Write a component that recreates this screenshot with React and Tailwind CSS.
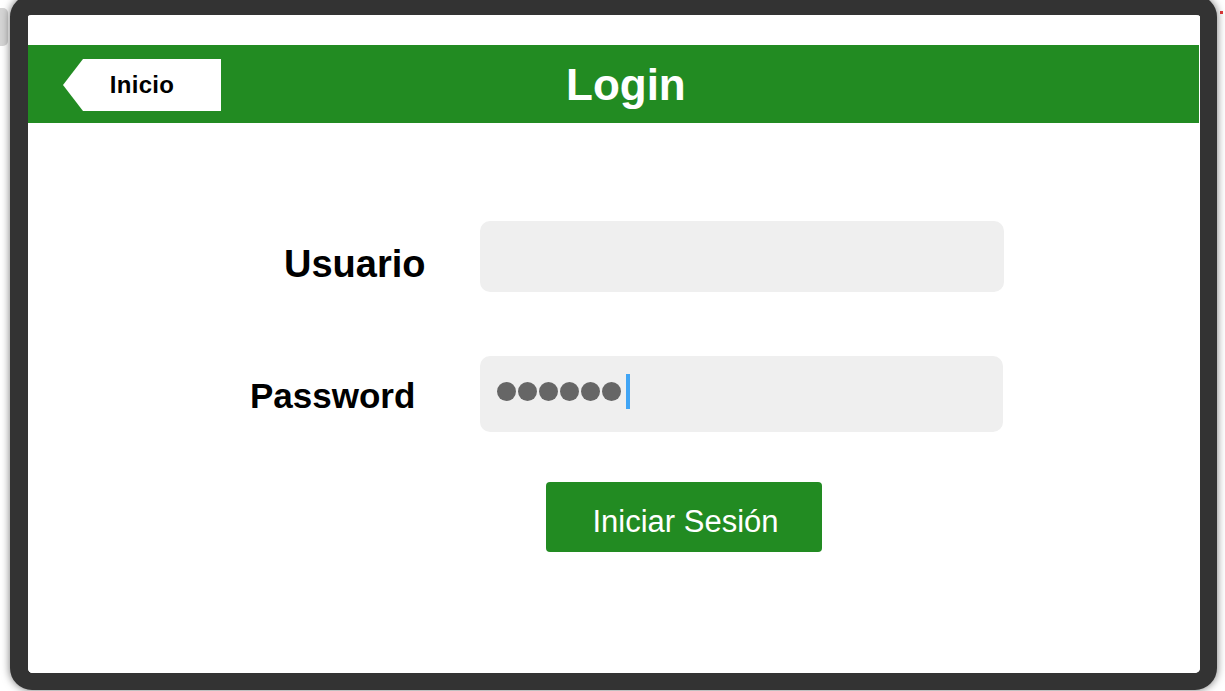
export default function App() {
  return (
    <div
      className="relative w-[1225px] h-[691px] overflow-hidden bg-white"
      style={{ fontFamily: '"Liberation Sans", Arial, Helvetica, sans-serif' }}
    >
      {/* faint element peeking behind the frame */}
      <div className="absolute left-[-12px] top-[8px] w-[20px] h-[38px] rounded-[5px] bg-[#d4d4d4]" />
      <div className="absolute right-[2px] top-[11px] w-[3px] h-[3px] bg-[#e23a3a]" />

      <div className="relative ml-[10px] mt-[-5px] w-[1207px] h-[695px] rounded-[22px] border-[#333333] border-l-[18px] border-t-[20px] border-r-[17px] border-b-[17px] bg-white shadow-[0_0_8px_rgba(0,0,0,0.55)] overflow-hidden">
        <div className="w-full h-full bg-white flex flex-col">
          {/* top white strip */}
          <div className="h-[30px] shrink-0" />

          {/* green header */}
          <div className="h-[78px] shrink-0 bg-[#228B22] flex items-center pl-[35px] mr-[1px]">
            <div className="relative w-[158px] h-[52px] mt-[1px]">
              <svg
                className="absolute inset-0"
                width="158"
                height="52"
                viewBox="0 0 158 52"
              >
                <polygon points="20,0 158,0 158,52 20,52 0,26" fill="#ffffff" />
              </svg>
              <div className="relative h-full flex items-center justify-center pt-[1px] text-[24px] font-bold text-black tracking-[0.3px]">
                Inicio
              </div>
            </div>
            <div className="ml-[345px] text-[44px] font-bold text-white leading-none mt-[2px]">
              Login
            </div>
          </div>

          {/* form */}
          <div className="pt-[98px] flex flex-col">
            <div className="flex items-center">
              <div className="w-[452px] pl-[256px] mt-[15px] text-[38px] font-bold text-black leading-none">
                Usuario
              </div>
              <div className="w-[524px] h-[71px] rounded-[10px] bg-[#efefef]" />
            </div>

            <div className="flex items-center mt-[64px]">
              <div className="w-[452px] pl-[222px] mt-[2px] text-[35px] font-bold text-black leading-none">
                Password
              </div>
              <div className="w-[523px] h-[76px] rounded-[10px] bg-[#efefef] flex items-center pl-[17px]">
                <div className="flex items-center gap-[2px] mt-[-6px]">
                  <span className="w-[19px] h-[19px] rounded-full bg-[#666666]" />
                  <span className="w-[19px] h-[19px] rounded-full bg-[#666666]" />
                  <span className="w-[19px] h-[19px] rounded-full bg-[#666666]" />
                  <span className="w-[19px] h-[19px] rounded-full bg-[#666666]" />
                  <span className="w-[19px] h-[19px] rounded-full bg-[#666666]" />
                  <span className="w-[19px] h-[19px] rounded-full bg-[#666666]" />
                  <span className="ml-[3px] w-[4px] h-[35px] bg-[#41a5f5]" />
                </div>
              </div>
            </div>

            <div className="mt-[50px] ml-[518px]">
              <div className="w-[276px] h-[70px] rounded-[4px] bg-[#228B22] flex items-center justify-center pt-[8px] pl-[3px] text-white text-[31px] leading-none">
                Iniciar Sesión
              </div>
            </div>
          </div>
        </div>
      </div>
    </div>
  );
}
